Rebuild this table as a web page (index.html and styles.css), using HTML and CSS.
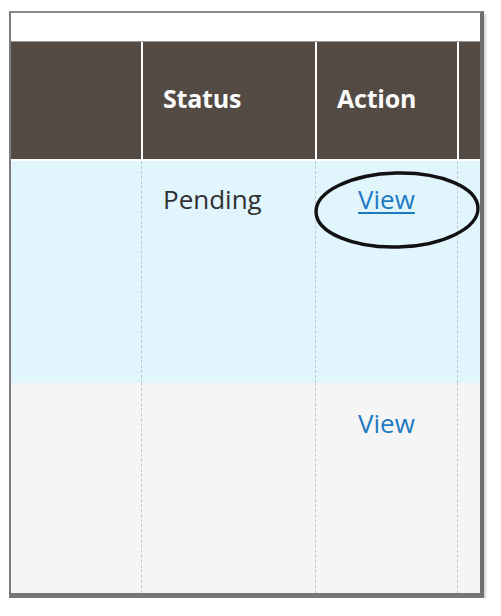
FILE: index.html
```html
<!DOCTYPE html>
<html>
<head>
<meta charset="utf-8">
<link rel="stylesheet" href="styles.css">
</head>
<body>
<div class="frame">
  <div class="topband"></div>
  <div class="grid">
    <div class="th first"></div>
    <div class="th">Status</div>
    <div class="th">Action</div>
    <div class="th last"></div>

    <div class="td blue first"></div>
    <div class="td blue">Pending</div>
    <div class="td blue action">
      <a class="link underline" href="#">View</a>
      <svg class="circle" width="170" height="82" viewBox="0 0 170 82">
        <ellipse cx="84" cy="40" rx="81" ry="37" fill="none" stroke="#111" stroke-width="3.4" transform="rotate(-1.5 84 40)"/>
      </svg>
    </div>
    <div class="td blue last"></div>

    <div class="td gray first"></div>
    <div class="td gray"></div>
    <div class="td gray action"><a class="link" href="#">View</a></div>
    <div class="td gray last"></div>
  </div>
</div>
</body>
</html>
```

FILE: styles.css
```css
html, body {
  margin: 0;
  padding: 0;
  background: #ffffff;
}

body {
  padding: 11px 0 0 9px;
  font-family: "Open Sans", "Noto Sans", sans-serif;
}

.frame {
  width: 469px;
  border-top: 2px solid #8a8a8a;
  border-left: 2px solid #7d7d7d;
  border-right: 4px solid #6f6f6f;
  border-bottom: 5px solid #767676;
  box-shadow: 2px 3px 2px rgba(0, 0, 0, 0.18);
  background: #fff;
}

.topband {
  height: 28px;
  border-bottom: 1px solid #9a9a9a;
  background: #fff;
}

.grid {
  display: grid;
  grid-template-columns: 130px 174px 142px 1fr;
  grid-template-rows: 119px 222px 210px;
}

.th {
  background: #544a44;
  color: #fbfbfb;
  font-weight: 700;
  font-size: 25px;
  border-left: 2px solid #ffffff;
  border-bottom: 2px solid #ffffff;
  display: flex;
  align-items: center;
  padding-left: 20px;
  padding-bottom: 6px;
  letter-spacing: -0.2px;
}

.th.first {
  border-left: none;
}

.td {
  border-left: 1px dashed #c6c6c6;
  padding: 20px 0 0 21px;
  font-size: 26px;
  line-height: 36px;
  color: #303030;
}

.td.first {
  border-left: none;
}

.blue {
  background: #e1f5fd;
}

.gray {
  background: #f5f5f5;
  padding-top: 22px;
}

.action {
  position: relative;
  padding-left: 42px;
}

.link {
  color: #1d7ac2;
  text-decoration: none;
}

.link.underline {
  text-decoration: underline;
  text-decoration-thickness: 2px;
  text-underline-offset: 3px;
}

.circle {
  position: absolute;
  left: -3px;
  top: 9px;
  overflow: visible;
}
```
